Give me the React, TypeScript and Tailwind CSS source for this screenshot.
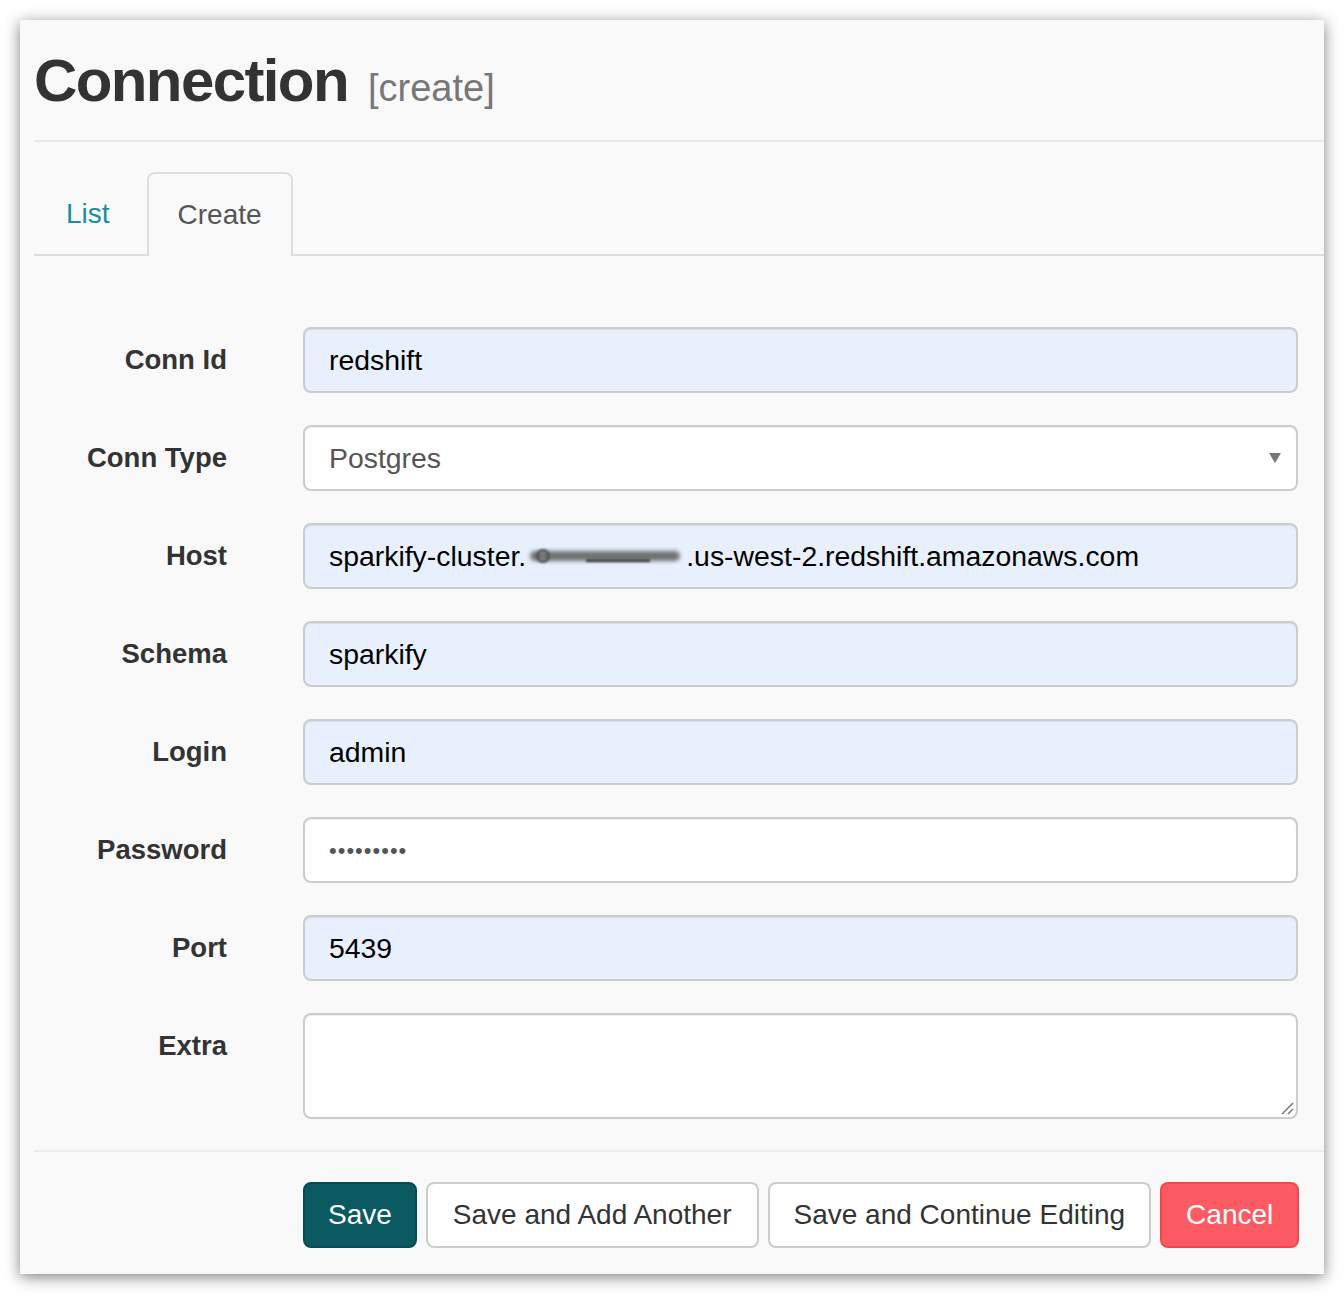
import type { ReactNode } from "react"

const FONT = { fontFamily: '"Liberation Sans", Arial, Helvetica, sans-serif' }

function Row({ label, children }: { label: string; children: ReactNode }) {
  return (
    <div className="flex items-start">
      <div className="flex h-[66px] w-[193px] shrink-0 items-center justify-end text-[27.5px] font-bold text-[#333]">
        {label}
      </div>
      <div className="ml-[76px] flex-1">{children}</div>
    </div>
  )
}

function Field({ children, autofill = true, muted = false }: { children: ReactNode; autofill?: boolean; muted?: boolean }) {
  return (
    <div
      className={`flex h-[66px] items-center rounded-[8px] border-2 border-[#ccc] px-[24px] text-[28.4px] shadow-[inset_0_1px_1px_rgba(0,0,0,0.075)] ${
        autofill ? "bg-[#e8f0fe]" : "bg-white"
      } ${muted ? "text-[#555]" : "text-black"}`}
    >
      {children}
    </div>
  )
}

export default function App() {
  return (
    <div className="min-h-[1294px] bg-white pt-[20px] pl-[20px] pr-[20px]" style={FONT}>
      <div className="h-[1254px] bg-[#f9f9f9] pl-[14px] shadow-[0_3px_14px_rgba(0,0,0,0.5)]">
        <div className="flex h-[122px] items-end border-b-2 border-[#e8e8e8] pb-[29px]">
          <div className="flex items-baseline">
            <h1 className="text-[60px] font-bold leading-none tracking-[-1.6px] text-[#333]">Connection</h1>
            <span className="ml-[20px] text-[38px] leading-none text-[#777]">[create]</span>
          </div>
        </div>

        <div className="mt-[31px] flex h-[83px] items-end border-b-2 border-[#ddd]">
          <div className="mb-[-2px] flex h-[84px] items-center pl-[32px] pr-[37px] text-[28px] text-[#17909c]">List</div>
          <div className="mb-[-2px] flex h-[84px] items-center rounded-t-[8px] border-2 border-b-0 border-[#ddd] bg-[#f9f9f9] px-[29px] text-[28px] text-[#555]">
            Create
          </div>
        </div>

        <div className="flex flex-col gap-[32px] pr-[26px] pt-[71px]">
          <Row label="Conn Id">
            <Field>redshift</Field>
          </Row>
          <Row label="Conn Type">
            <Field autofill={false} muted>
              <span className="flex-1">Postgres</span>
              <svg width="12" height="10" viewBox="0 0 12 10" className="mr-[-9px]">
                <path d="M0 0 L12 0 L6 10 Z" fill="#777" />
              </svg>
            </Field>
          </Row>
          <Row label="Host">
            <Field>
              <span>sparkify-cluster.</span>
              <span className="relative inline-block h-[28px] w-[160px]">
                <span className="absolute left-[4px] right-[6px] top-[9px] h-[10px] rounded-full bg-[#707070] blur-[2px]" />
                <span className="absolute left-[10px] w-[14px] top-[7px] h-[14px] rounded-full border-[3px] border-[#555] blur-[1px]" />
                <span className="absolute left-[60px] right-[36px] top-[17px] h-[3px] bg-[#444] blur-[1px]" />
              </span>
              <span>.us-west-2.redshift.amazonaws.com</span>
            </Field>
          </Row>
          <Row label="Schema">
            <Field>sparkify</Field>
          </Row>
          <Row label="Login">
            <Field>admin</Field>
          </Row>
          <Row label="Password">
            <Field autofill={false} muted>
              <span className="text-[22px] tracking-[1px]">•••••••••</span>
            </Field>
          </Row>
          <Row label="Port">
            <Field>5439</Field>
          </Row>
          <Row label="Extra">
            <div className="relative h-[106px] rounded-[8px] border-2 border-[#ccc] bg-white shadow-[inset_0_1px_1px_rgba(0,0,0,0.075)]">
              <svg width="14" height="14" viewBox="0 0 14 14" className="absolute bottom-[2px] right-[2px]">
                <line x1="2" y1="13" x2="13" y2="2" stroke="#777" strokeWidth="1.5" />
                <line x1="8" y1="13" x2="13" y2="8" stroke="#777" strokeWidth="1.5" />
              </svg>
            </div>
          </Row>
        </div>

        <div className="mt-[31px] border-t-2 border-[#ececec] pt-[30px]">
          <div className="ml-[269px] flex gap-[9px] text-[28px]">
            <button className="h-[66px] rounded-[8px] border-2 border-[#094d54] bg-[#0b5a62] px-[23px] text-white">Save</button>
            <button className="h-[66px] rounded-[8px] border-2 border-[#ccc] bg-white px-[25px] text-[#333]">Save and Add Another</button>
            <button className="h-[66px] rounded-[8px] border-2 border-[#ccc] bg-white px-[24px] text-[#333]">Save and Continue Editing</button>
            <button className="h-[66px] rounded-[8px] border-2 border-[#f0474f] bg-[#fc5b63] px-[24px] text-white">Cancel</button>
          </div>
        </div>
      </div>
    </div>
  )
}
